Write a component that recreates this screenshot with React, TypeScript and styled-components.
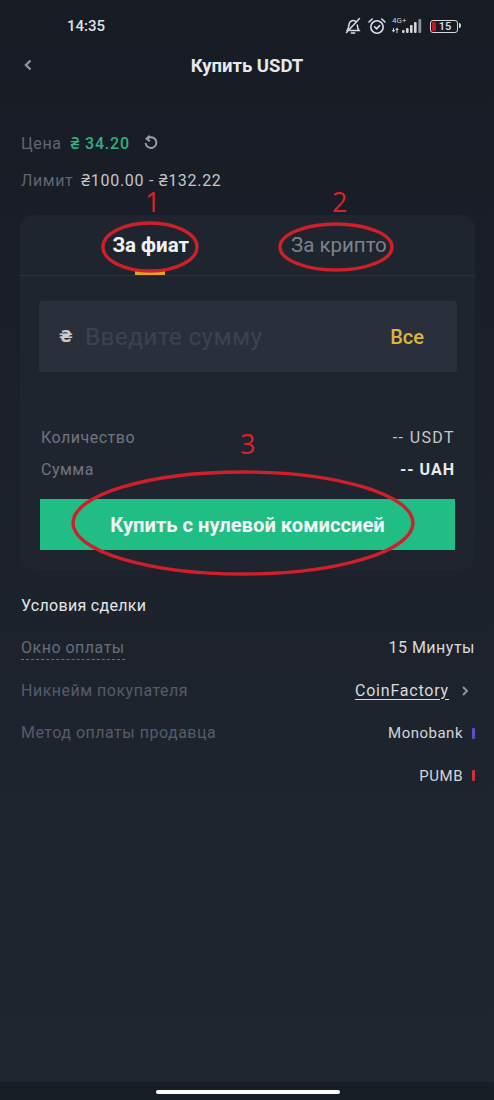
import styled, { createGlobalStyle } from "styled-components"

const GlobalStyle = createGlobalStyle`
    html, body {
        margin: 0;
        padding: 0;
        background: #181c25;
    }
    * {
        box-sizing: border-box;
    }
`;

const Page = styled.div`
    position: relative;
    width: 494px;
    height: 1100px;
    overflow: hidden;
    display: flex;
    flex-direction: column;
    background: linear-gradient(180deg, #171b24 0%, #1a1f29 30%, #1e242e 70%, #1f2630 100%);
    font-family: Roboto, "Noto Sans", sans-serif;
    color: #eaecef;
`;

const StatusBar = styled.div`
    height: 52px;
    flex: none;
    padding: 0 36px 0 67px;
    display: flex;
    align-items: center;
    justify-content: space-between;
    color: #dfe1e4;
`;

const Time = styled.span`
    font-size: 15px;
    font-weight: 500;
`;

const StatusIcons = styled.div`
    display: flex;
    align-items: center;
    gap: 6px;
`;

const Network = styled.div`
    position: relative;
    width: 32px;
    height: 18px;
    margin-left: -2px;
`;

const NetworkLabel = styled.span`
    position: absolute;
    left: 2px;
    top: 0;
    font-size: 8px;
    line-height: 8px;
    color: #c9ccd0;
`;

const Battery = styled.div`
    position: relative;
    width: 28px;
    height: 13px;
    margin-left: 2px;
    border: 1.5px solid #d8dadd;
    border-radius: 3px;
    display: flex;
    align-items: center;
    justify-content: center;
    font-size: 11px;
    line-height: 1;
    font-weight: 500;
    color: #dfe1e4;
    padding-left: 2px;

    &::before {
        content: "";
        position: absolute;
        left: 1px;
        top: 1px;
        bottom: 1px;
        width: 4px;
        border-radius: 1px;
        background: #c4161c;
    }

    &::after {
        content: "";
        position: absolute;
        right: -4px;
        top: 2.5px;
        width: 2px;
        height: 5px;
        border-radius: 0 2px 2px 0;
        background: #d8dadd;
    }
`;

const Header = styled.header`
    position: relative;
    height: 28px;
    flex: none;
    display: flex;
    align-items: center;
    justify-content: center;
    font-size: 18.5px;
    font-weight: 700;
    color: #e6e8ea;
`;

const BackIcon = styled.svg`
    position: absolute;
    left: 23px;
    top: 6px;
`;

const Summary = styled.section`
    margin-top: 53px;
    padding: 0 21px;
    display: flex;
    flex-direction: column;
    gap: 17px;
`;

const SummaryRow = styled.div`
    height: 20px;
    display: flex;
    align-items: center;
    font-size: 16px;
    letter-spacing: 0.6px;
`;

const Muted = styled.span`
    color: #5f6672;
`;

const Price = styled.span`
    margin-left: 9px;
    font-weight: 500;
    letter-spacing: 0.8px;
    color: #2cb283;
`;

const LimitValue = styled.span`
    margin-left: 8px;
    letter-spacing: 0.7px;
    color: #c3c6cb;
`;

const RefreshIcon = styled.svg`
    margin-left: 13px;
`;

const Card = styled.section`
    width: 455px;
    height: 355px;
    margin: 25px 0 0 20px;
    flex: none;
    background: #1f252f;
    border-radius: 14px;
    display: flex;
    flex-direction: column;
`;

const Tabs = styled.div`
    height: 61px;
    flex: none;
    display: grid;
    grid-template-columns: 260px 1fr;
    border-bottom: 1px solid #2d333e;
`;

const Tab = styled.div<{ $active?: boolean }>`
    position: relative;
    display: flex;
    align-items: center;
    justify-content: ${(p) => (p.$active ? "flex-end" : "flex-start")};
    padding: 0 ${(p) => (p.$active ? "91px" : "0")} 0 ${(p) => (p.$active ? "0" : "11px")};
    font-size: ${(p) => (p.$active ? "20.5px" : "20.5px")};
    font-weight: ${(p) => (p.$active ? 700 : 400)};
    color: ${(p) => (p.$active ? "#f2f3f4" : "#7c828d")};
`;

const TabMark = styled.span`
    position: absolute;
    left: 115px;
    bottom: 0;
    width: 30px;
    height: 4px;
    background: #e3a51f;
`;

const AmountField = styled.div`
    height: 71px;
    margin: 25px 18px 0 19px;
    flex: none;
    padding: 0 33px 0 20px;
    background: #2a303b;
    border-radius: 3px;
    display: flex;
    align-items: center;
`;

const Hryvnia = styled.span`
    width: 26px;
    font-family: "DejaVu Sans", sans-serif;
    font-size: 16px;
    font-weight: 700;
    color: #c8cbd0;
`;

const Placeholder = styled.span`
    flex: 1;
    font-size: 24.5px;
    letter-spacing: 0.3px;
    color: #3c4350;
`;

const AllButton = styled.span`
    font-size: 20px;
    font-weight: 500;
    color: #dcb541;
`;

const Totals = styled.div`
    margin: 55px 20px 0 21px;
    display: flex;
    flex-direction: column;
    gap: 12px;
`;

const TotalRow = styled.div`
    height: 20px;
    display: flex;
    align-items: center;
    justify-content: space-between;
    font-size: 16px;
    letter-spacing: 0.5px;
    color: #6f7580;
`;

const TotalValue = styled.span<{ $strong?: boolean }>`
    letter-spacing: ${(p) => (p.$strong ? "1px" : "1.4px")};
    font-weight: ${(p) => (p.$strong ? 700 : 400)};
    color: ${(p) => (p.$strong ? "#e8eaec" : "#c5c8cc")};
`;

const BuyButton = styled.div`
    height: 51px;
    margin: 20px 20px 0 20px;
    flex: none;
    background: #20bd85;
    display: flex;
    align-items: center;
    justify-content: center;
    font-size: 20.2px;
    font-weight: 700;
    color: #f2f6f4;
`;

const Terms = styled.section`
    margin-top: 26px;
    padding: 0 19px 0 21px;
    display: flex;
    flex-direction: column;
`;

const TermsTitle = styled.h2`
    margin: 0 0 22px;
    height: 20px;
    line-height: 20px;
    font-size: 16px;
    font-weight: 400;
    letter-spacing: 0.3px;
    color: #e4e6e8;
`;

const TermRow = styled.div<{ $end?: boolean }>`
    height: 42.5px;
    display: flex;
    justify-content: ${(p) => (p.$end ? "flex-end" : "space-between")};
    align-items: flex-start;
    font-size: 16px;
    line-height: 20px;
    letter-spacing: 0.5px;
    color: #555c68;
`;

const DashedLabel = styled.span`
    padding-bottom: 1px;
    border-bottom: 1px dashed #6a707b;
    color: #666d78;
`;

const TermValue = styled.span`
    display: flex;
    align-items: center;
    color: #d8dadd;
`;

const Seller = styled.span`
    text-decoration: underline;
    text-underline-offset: 3px;
    letter-spacing: 0.8px;
    color: #d8dadd;
`;

const SellerArrow = styled.svg`
    margin: 0 6px 0 12px;
`;

const PayMethod = styled.span`
    display: flex;
    align-items: center;
    gap: 9px;
    font-size: 15px;
    color: #d4d6da;
`;

const PayMark = styled.i<{ $color: string }>`
    width: 3px;
    height: 11px;
    border-radius: 1px;
    background: ${(p) => p.$color};
`;

const NavBar = styled.div`
    position: absolute;
    left: 0;
    right: 0;
    bottom: 0;
    height: 18px;
    background: #181e26;
`;

const HomeBar = styled.span`
    position: absolute;
    left: 156px;
    top: 8px;
    width: 184px;
    height: 4px;
    border-radius: 2px;
    background: #ffffff;
`;

/* annotations drawn on top of the screenshot */
const Marks = styled.svg`
    position: absolute;
    left: 0;
    top: 0;
    pointer-events: none;
`;

const MarkNumber = styled.span<{ $x: number; $y: number }>`
    position: absolute;
    left: ${(p) => p.$x}px;
    top: ${(p) => p.$y}px;
    font-family: "Open Sans", sans-serif;
    font-size: 27px;
    line-height: 22px;
    color: #d8232a;
`;

function BellOff() {
    return (
        <svg width="18" height="18" viewBox="0 0 18 18" fill="none" stroke="#dcdee1" strokeWidth="1.5" strokeLinecap="round">
            <path d="M3 13.5c1.3-1.2 1.6-2.5 1.8-4.6C5 6 6.6 3.8 9 3.6c1.4-.1 2.5.4 3.3 1.3M13.3 8c.2 2.6.6 4.3 1.7 5.5H6" />
            <path d="M7.3 16h3.4" />
            <path d="M2.5 15.5 15.5 1.5" />
        </svg>
    );
}

function Alarm() {
    return (
        <svg width="18" height="18" viewBox="0 0 18 18" fill="none" stroke="#dcdee1" strokeWidth="1.6" strokeLinecap="round">
            <circle cx="9" cy="10" r="6.2" />
            <path d="M6.6 9.8 8.6 11.8 11.6 8.6" />
            <path d="M1 5 4.2 2M17 5 13.8 2" />
        </svg>
    );
}

function Signal() {
    return (
        <svg width="32" height="18" viewBox="0 0 32 18" fill="#d4d6da">
            <path d="M3 11h1v4H3zM1.8 13h3.4L3.5 15.5zM6.5 12h1v4h-1zM5.3 13l1.7-2.5L8.7 13z" />
            <rect x="12" y="13" width="2.6" height="3" rx="1" />
            <rect x="16" y="11" width="2.6" height="5" rx="1" />
            <rect x="20" y="8" width="2.6" height="8" rx="1" />
            <rect x="24" y="5" width="2.6" height="11" rx="1" />
            <rect x="28.4" y="2" width="2.8" height="14" rx="1" fill="#8d9298" />
        </svg>
    );
}

export default function App() {
    return (
        <Page>
            <GlobalStyle />
            <StatusBar>
                <Time>14:35</Time>
                <StatusIcons>
                    <BellOff />
                    <Alarm />
                    <Network>
                        <NetworkLabel>4G+</NetworkLabel>
                        <Signal />
                    </Network>
                    <Battery>15</Battery>
                </StatusIcons>
            </StatusBar>

            <Header>
                <BackIcon width="10" height="14" viewBox="0 0 10 14" fill="none" stroke="#8e939b" strokeWidth="2.4">
                    <path d="M7.5 2.5 3 7l4.5 4.5" />
                </BackIcon>
                Купить USDT
            </Header>

            <Summary>
                <SummaryRow>
                    <Muted>Цена</Muted>
                    <Price>₴ 34.20</Price>
                    <RefreshIcon width="16" height="16" viewBox="0 0 16 16" fill="none" stroke="#9a9ea5" strokeWidth="2">
                        <path d="M4.3 3.6A5.4 5.4 0 1 1 2.6 8" />
                        <path d="M6.8 0.8 3.6 3.6l3.2 2.6" />
                    </RefreshIcon>
                </SummaryRow>
                <SummaryRow>
                    <Muted>Лимит</Muted>
                    <LimitValue>₴100.00 - ₴132.22</LimitValue>
                </SummaryRow>
            </Summary>

            <Card>
                <Tabs>
                    <Tab $active>
                        За фиат
                        <TabMark />
                    </Tab>
                    <Tab>За крипто</Tab>
                </Tabs>
                <AmountField>
                    <Hryvnia>₴</Hryvnia>
                    <Placeholder>Введите сумму</Placeholder>
                    <AllButton>Все</AllButton>
                </AmountField>
                <Totals>
                    <TotalRow>
                        Количество
                        <TotalValue>-- USDT</TotalValue>
                    </TotalRow>
                    <TotalRow>
                        Сумма
                        <TotalValue $strong>-- UAH</TotalValue>
                    </TotalRow>
                </Totals>
                <BuyButton>Купить с нулевой комиссией</BuyButton>
            </Card>

            <Terms>
                <TermsTitle>Условия сделки</TermsTitle>
                <TermRow>
                    <DashedLabel>Окно оплаты</DashedLabel>
                    <TermValue>15 Минуты</TermValue>
                </TermRow>
                <TermRow>
                    Никнейм покупателя
                    <TermValue>
                        <Seller>CoinFactory</Seller>
                        <SellerArrow width="8" height="12" viewBox="0 0 8 12" fill="none" stroke="#8e939b" strokeWidth="2">
                            <path d="M2 2l4 4-4 4" />
                        </SellerArrow>
                    </TermValue>
                </TermRow>
                <TermRow>
                    Метод оплаты продавца
                    <PayMethod>
                        Monobank
                        <PayMark $color="#5b4fc4" />
                    </PayMethod>
                </TermRow>
                <TermRow $end>
                    <PayMethod>
                        PUMB
                        <PayMark $color="#cf3036" />
                    </PayMethod>
                </TermRow>
            </Terms>

            <NavBar>
                <HomeBar />
            </NavBar>

            <Marks width="494" height="1100" viewBox="0 0 494 1100" fill="none" stroke="#cf1f2a" strokeWidth="3.4">
                <ellipse cx="150" cy="247" rx="47" ry="24" />
                <ellipse cx="336" cy="247" rx="56" ry="23" />
                <ellipse cx="243" cy="523" rx="170" ry="51" />
            </Marks>
            <MarkNumber $x={145} $y={191}>1</MarkNumber>
            <MarkNumber $x={332} $y={191}>2</MarkNumber>
            <MarkNumber $x={240} $y={433}>3</MarkNumber>
        </Page>
    );
}
